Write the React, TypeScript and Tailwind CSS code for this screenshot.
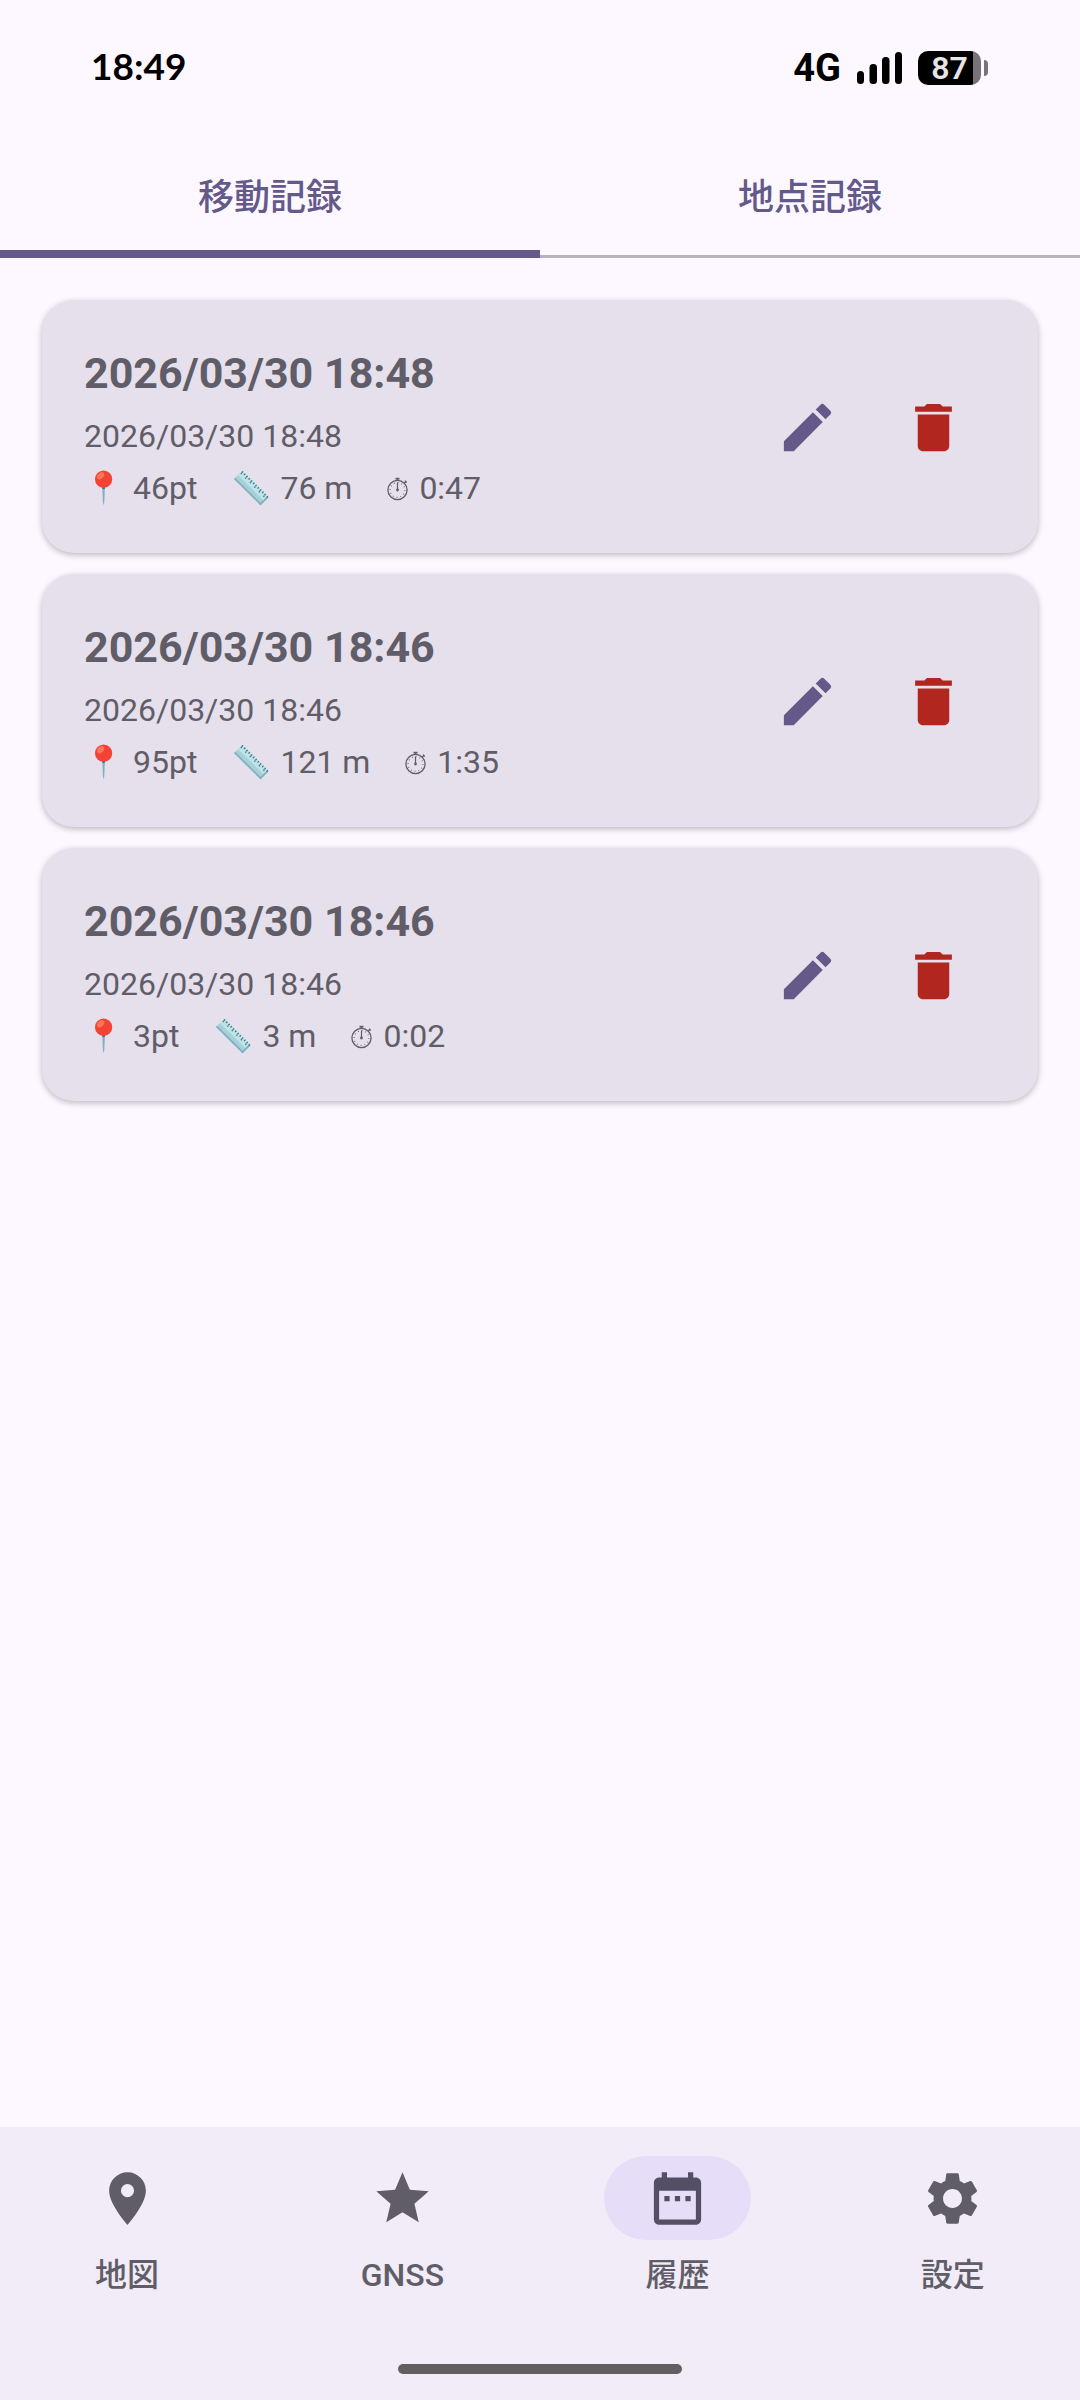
import React, { useState } from "react";
import {
  MdDateRange,
  MdDelete,
  MdEdit,
  MdPlace,
  MdSettings,
} from "react-icons/md";

type TrackRecord = {
  title: string;
  date: string;
  points: string;
  distance: string;
  time: string;
};

type TabButtonProps = {
  label: string;
  selected: boolean;
  onClick: () => void;
};

type NavButtonProps = {
  label: string;
  selected?: boolean;
  children: React.ReactNode;
};

const records: TrackRecord[] = [
  {
    title: "2026/03/30 18:48",
    date: "2026/03/30 18:48",
    points: "46pt",
    distance: "76 m",
    time: "0:47",
  },
  {
    title: "2026/03/30 18:46",
    date: "2026/03/30 18:46",
    points: "95pt",
    distance: "121 m",
    time: "1:35",
  },
  {
    title: "2026/03/30 18:46",
    date: "2026/03/30 18:46",
    points: "3pt",
    distance: "3 m",
    time: "0:02",
  },
];

const tabs = ["移動記録", "地点記録"];

const PinIcon = () => (
  <svg viewBox="0 0 40 36" className="w-10 h-9" aria-hidden="true">
    <path d="M18.2 14h2.8l-.7 18-.7 3.4-.7-3.4z" fill="#82AEC0" />
    <path d="M18.2 14h2.8l-.2 5h-2.4z" fill="#2F7889" />
    <circle cx="19.6" cy="9.2" r="8.6" fill="#F44336" />
    <ellipse
      cx="16.6"
      cy="5.8"
      rx="4.2"
      ry="2.8"
      transform="rotate(-42 16.6 5.8)"
      fill="#FF7555"
    />
  </svg>
);

const RulerIcon = () => (
  <svg viewBox="0 0 40 36" className="w-10 h-9" aria-hidden="true">
    <path d="M11 1 37.5 27.5 29.5 35.3 3 9z" fill="#A6D1D8" />
    <path d="M11 1 37.5 27.5 33.6 31.4 7 5z" fill="#BFE3E6" />
    <path d="M3 9 29.5 35.3 30.7 34.1 4.2 7.8z" fill="#82AEC0" />
    <path d="M37.5 27.5 29.5 35.3 28.3 34.1 36.3 26.3z" fill="#82AEC0" />
    <path
      d="M11 1.6 36.6 27.2"
      stroke="#2F7889"
      strokeWidth="2"
      strokeDasharray="1.2 2"
    />
    <path
      d="M9.8 3.2 34.6 28"
      stroke="#2F7889"
      strokeWidth="1.4"
      strokeDasharray="1.2 5.2"
    />
  </svg>
);

const StopwatchIcon = () => (
  <svg viewBox="2 0 24 28" className="w-6 h-7" fill="none" aria-hidden="true">
    <circle cx="13.5" cy="16" r="9.6" stroke="#605D68" strokeWidth="1.3" />
    <circle
      cx="13.5"
      cy="16"
      r="7.4"
      stroke="#605D68"
      strokeWidth="1.2"
      strokeDasharray="0.8 3.07"
    />
    <path d="M13.5 8.5V16M13.5 6V4.4" stroke="#605D68" strokeWidth="1.2" />
    <path d="M11.5 4.7h4" stroke="#605D68" strokeWidth="1.8" />
    <path d="m20.2 9.1 1.6-1.6M21 6.7l1.8 1.8" stroke="#605D68" strokeWidth="1.2" />
    <circle cx="13.5" cy="16" r="1.4" fill="#605D68" />
  </svg>
);

const SignalIcon = () => (
  <svg viewBox="0 0 45 34" className="w-[45px] h-[34px]" aria-hidden="true">
    <rect x="0" y="20" width="7" height="13" rx="3.5" />
    <rect x="12.5" y="13" width="7.5" height="20" rx="3.5" />
    <rect x="25" y="6" width="7.5" height="27" rx="3.5" />
    <rect x="38" y="1" width="7" height="32" rx="3.5" />
  </svg>
);

const StatusBar = () => (
  <div className="flex items-center justify-between h-[135px] pl-[91px] pr-[92px] text-black">
    <span className="font-[Lato] font-bold text-[37px] leading-none pb-1">
      18:49
    </span>
    <div className="flex items-center">
      <span className="font-bold text-[38px] leading-none mr-4">4G</span>
      <SignalIcon />
      <div className="flex items-center gap-[3px] ml-4">
        <div className="w-[63px] h-[34px] rounded-[10px] bg-linear-to-r from-black from-87% to-[#777379] to-87% flex items-center justify-center text-[#E6E4E6] text-[32px] font-semibold leading-none">
          87
        </div>
        <div className="w-1 h-4 rounded-r bg-[#777379]" />
      </div>
    </div>
  </div>
);

const TabButton = (props: TabButtonProps) => (
  <button
    role="tab"
    aria-selected={props.selected}
    onClick={props.onClick}
    className={
      props.selected
        ? "flex-1 h-[123px] pt-[10px] border-b-8 border-[#645A8A]"
        : "flex-1 h-[123px] pt-[10px] pb-[5px] border-b-3 border-[#B8B2C0]"
    }
  >
    {props.label}
  </button>
);

const RecordCard = (props: TrackRecord) => (
  <li className="flex items-center justify-between px-[42px] pt-[42px] pb-11 rounded-[32px] bg-[#E5E0EB] shadow-[0_2px_6px_rgba(0,0,0,0.26)]">
    <div>
      <h2 className="text-[43px] leading-[63px] font-bold">{props.title}</h2>
      <p className="mt-[10px] text-[32px] leading-[42px]">{props.date}</p>
      <div className="mt-[10px] flex gap-[34px] text-[32px] leading-[42px]">
        <span className="flex items-center gap-[9px]">
          <PinIcon />
          {props.points}
        </span>
        <span className="flex items-center gap-[9px]">
          <RulerIcon />
          {props.distance}
        </span>
        <span className="flex items-center gap-[9px]">
          <StopwatchIcon />
          {props.time}
        </span>
      </div>
    </div>
    <div className="flex text-[63px]">
      <button
        aria-label="編集"
        className="w-[126px] h-[126px] pt-1 flex items-center justify-center text-[#645A8A]"
      >
        <MdEdit />
      </button>
      <button
        aria-label="削除"
        className="w-[126px] h-[126px] pt-1 flex items-center justify-center text-[#B1261E]"
      >
        <MdDelete />
      </button>
    </div>
  </li>
);

const NavButton = (props: NavButtonProps) => (
  <button
    aria-current={props.selected ? "page" : undefined}
    className="flex-1 flex flex-col items-center gap-[14px]"
  >
    <span
      className={
        props.selected
          ? "w-[147px] h-[84px] rounded-full flex items-center justify-center text-[63px] bg-[#E6DEF8] text-[#544F65]"
          : "w-[147px] h-[84px] rounded-full flex items-center justify-center text-[63px]"
      }
    >
      {props.children}
    </span>
    <span className="text-[32px] leading-[42px] font-medium">
      {props.label}
    </span>
  </button>
);

const App = () => {
  const [tab, setTab] = useState(0);
  return (
    <div className="min-h-screen flex flex-col bg-[#FDF8FF] text-[#605D68] font-['Roboto','Noto_Sans_CJK_JP',sans-serif]">
      <StatusBar />
      <div
        role="tablist"
        className="flex text-[36px] font-medium text-[#645A8A]"
      >
        {tabs.map((label, i) => (
          <TabButton
            key={label}
            label={label}
            selected={tab === i}
            onClick={() => setTab(i)}
          />
        ))}
      </div>
      <main className="flex-1 px-[42px] pt-[42px]">
        <ul className="flex flex-col gap-[21px]">
          {records.map((record, i) => (
            <RecordCard key={i} {...record} />
          ))}
        </ul>
      </main>
      <footer className="bg-[#F1ECF7] pt-[29px] pb-[26px]">
        <nav className="flex gap-[21px]">
          <NavButton label="地図">
            <MdPlace />
          </NavButton>
          <NavButton label="GNSS">
            <svg
              viewBox="0 0 24 24"
              className="w-[63px] h-[63px]"
              fill="currentColor"
            >
              <path d="M12 17.27 18.18 21l-1.64-7.03L22 9.24l-7.19-.61L12 2 9.19 8.63 2 9.24l5.46 4.73L5.82 21z" />
            </svg>
          </NavButton>
          <NavButton label="履歴" selected>
            <MdDateRange />
          </NavButton>
          <NavButton label="設定">
            <MdSettings />
          </NavButton>
        </nav>
        <div className="mt-[68px] mx-auto w-[284px] h-[10px] rounded-full bg-[#615F62]" />
      </footer>
    </div>
  );
};

export default App;
